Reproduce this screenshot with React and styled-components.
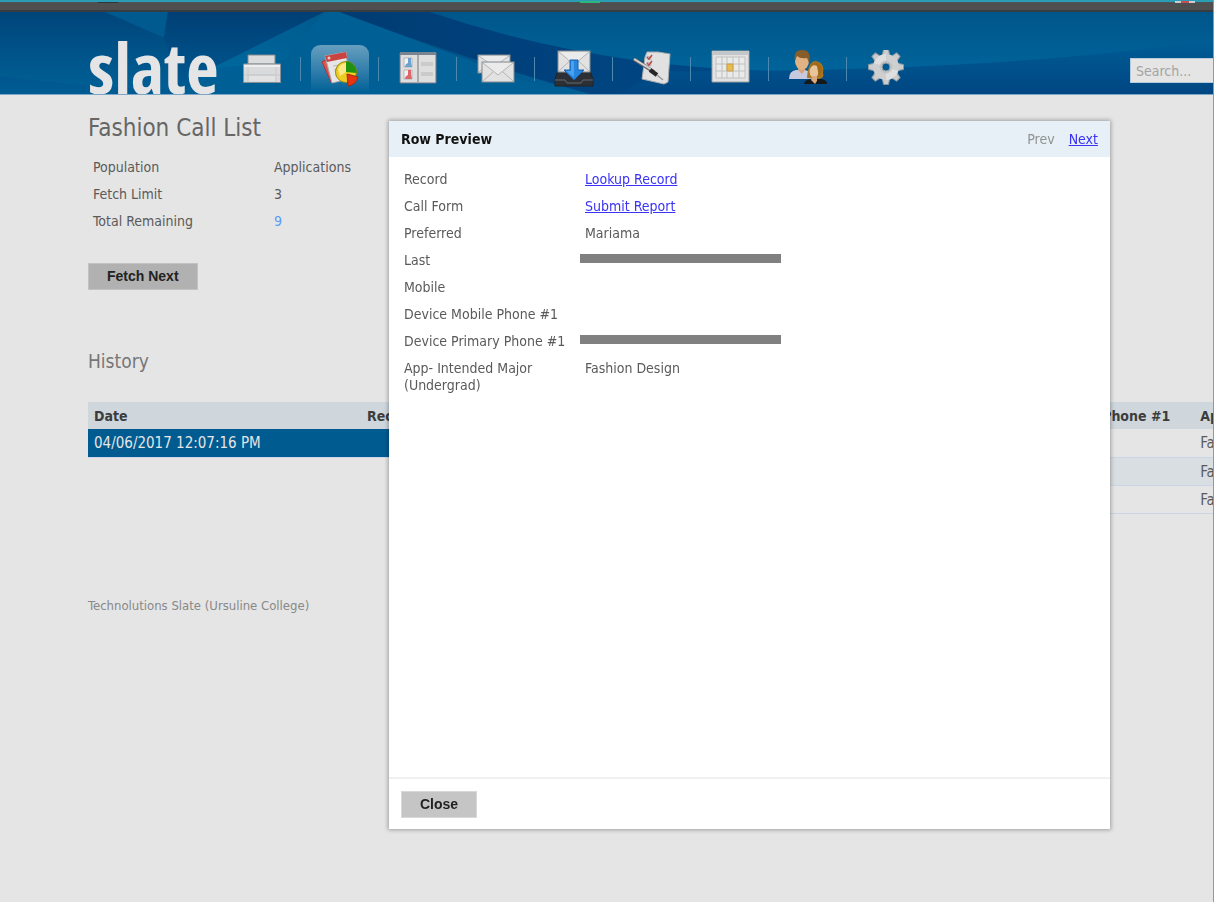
import React from "react";
import styled, { createGlobalStyle } from "styled-components";

const GlobalStyle = createGlobalStyle`
  * { box-sizing: border-box; }
  html, body { margin: 0; padding: 0; }
  body {
    background: #e5e5e5;
    color: #5a5a5a;
    font-family: "DejaVu Sans Condensed", "DejaVu Sans", "Noto Sans", sans-serif;
    font-size: 14px;
    line-height: 17px;
    overflow: hidden;
  }
`;

const Page = styled.div`
  min-height: 100vh;
  border-right: 1px solid #7ba3ad;
  overflow: hidden;
`;

const WindowBar = styled.div`
  height: 12px;
  display: flex;
  align-items: flex-start;
  padding: 0 18px 0 98px;
  background: linear-gradient(#2b9db5 0 2px, #4e5558 2px 3px, #4f4f4f 3px 10px, #363c40 10px);
`;

const Mark = styled.span`
  width: 20px;
  height: 3px;
  margin-left: ${(p) => p.$gap};
  background: ${(p) => p.$fill};
`;

const Header = styled.header`
  position: relative;
  height: 83px;
  display: flex;
  align-items: stretch;
  padding-left: 88px;
  background: #005b92;
  border-bottom: 1px solid #7da5c6;
  overflow: hidden;
`;

const Backdrop = styled.svg`
  position: absolute;
  inset: 0;
  width: 100%;
  height: 100%;
`;

const Logo = styled.a`
  position: relative;
  width: 135px;
  height: 83px;
  flex: none;
  overflow: hidden;
  color: #e5e5e5;
  font-family: "Liberation Sans Narrow", "Open Sans Condensed", "Noto Sans Condensed", "Liberation Sans", sans-serif;
  font-weight: 700;
  font-size: 70px;
  line-height: 110px;
  text-decoration: none;
`;

const Nav = styled.nav`
  position: relative;
  display: flex;
  flex: none;
`;

const NavItem = styled.a`
  width: 78px;
  display: flex;
  justify-content: center;
  padding-top: 33px;
  position: relative;
  &:not(:last-child)::after {
    content: "";
    position: absolute;
    right: 0;
    top: 45px;
    width: 1px;
    height: 24px;
    background: #4d88b0;
  }
`;

const NavTile = styled.span`
  width: 58px;
  height: 50px;
  display: flex;
  justify-content: center;
  padding-top: 5px;
  border-radius: 9px 9px 0 0;
  background: ${(p) => (p.$active ? "linear-gradient(rgba(230, 235, 240, 0.45), rgba(200, 220, 235, 0.25) 50%, rgba(200, 220, 235, 0) 96%)" : "none")};
`;

const Search = styled.input`
  position: relative;
  margin: 46px -41px 0 auto;
  width: 124px;
  height: 25px;
  padding: 0 5px;
  border: 1px solid #b8cbda;
  border-radius: 0;
  background: #e5e5e5;
  color: #555;
  font: inherit;
  &::placeholder { color: #a3a3a3; opacity: 1; }
`;

const Main = styled.main`
  padding: 20px 0 0 88px;
`;

const Title = styled.h1`
  margin: 0;
  color: #666;
  font-size: 24px;
  line-height: 26px;
  font-weight: 400;
`;

const Subtitle = styled.h2`
  margin: 59px 0 0;
  color: #777;
  font-size: 19px;
  line-height: 24px;
  font-weight: 400;
`;

const Fields = styled.table`
  border-collapse: collapse;
  table-layout: fixed;
  width: 382px;
  margin-top: ${(p) => p.$top}px;
  th, td {
    padding: 5px;
    text-align: left;
    vertical-align: top;
    font-weight: 400;
  }
  th { width: 181px; padding-right: 0; }
`;

const Count = styled.span`
  color: #5c9bf5;
`;

const Button = styled.button`
  height: 27px;
  padding: 0 18px;
  border: 1px solid ${(p) => (p.$light ? "#d8d8d8" : "#c2c2c2")};
  background: ${(p) => (p.$light ? "#c5c5c5" : "#b1b1b1")};
  color: #222;
  font: 700 14px/17px "Liberation Sans", Arial, sans-serif;
`;

const FetchButton = styled(Button)`
  display: block;
  margin-top: 28px;
`;

const History = styled.div`
  display: flex;
  margin-top: 29px;
`;

const HistoryTable = styled.table`
  border-collapse: collapse;
  flex: none;
  align-self: flex-start;
  white-space: nowrap;
  th, td { text-align: left; padding: 2px 24px 0 6px; }
  th { height: 27px; background: #cfd7dd; color: #3c3c3c; }
  td { height: 28px; border-bottom: 1px solid #ccd5e6; font-size: 15px; }
  th:first-child { width: ${(p) => (p.$first ? `${p.$first}px` : "auto")}; }
`;

const PhoneTable = styled(HistoryTable)`
  margin-left: auto;
  margin-right: -157px;
`;

const Row = styled.tr`
  background: ${(p) => (p.$selected ? "#005b91" : p.$alt ? "#d9dee2" : "transparent")};
  color: ${(p) => (p.$selected ? "#e5e5e5" : "inherit")};
`;

const Footer = styled.footer`
  margin-top: 83px;
  color: #888;
  font-size: 13px;
`;

const Dialog = styled.section`
  position: fixed;
  top: 121px;
  right: 104px;
  bottom: 73px;
  left: 389px;
  display: flex;
  flex-direction: column;
  background: #fff;
  box-shadow: 0 0 4px 1px rgba(0, 0, 0, 0.3);
`;

const DialogHeader = styled.header`
  display: flex;
  align-items: center;
  gap: 14px;
  height: 36px;
  padding: 0 12px;
  background: #e6f0f6;
`;

const DialogTitle = styled.h2`
  flex: 1;
  margin: 0;
  color: #111;
  font-size: 14px;
`;

const Muted = styled.span`
  color: #929292;
`;

const Link = styled.a`
  color: #3a32f5;
  text-decoration: underline;
`;

const DialogBody = styled.div`
  flex: 1;
  padding: 0 10px;
`;

const RedactedCell = styled.td`
  && { padding: 7px 0 0; }
`;

const Redaction = styled.span`
  display: block;
  height: 9px;
  background: #808080;
`;

const DialogFooter = styled.footer`
  padding: 12px;
  height: 52px;
  border-top: 2px solid #f1f1f1;
`;

const Icon = ({ children }) => (
  <svg width="40" height="40" viewBox="0 0 40 40" aria-hidden="true">{children}</svg>
);

const Envelope = ({ x, y, w = 32, h = 20 }) => (
  <g transform={`translate(${x} ${y})`} stroke="#b4b4b4" fill="none">
    <rect width={w} height={h} fill="#e2e2e2" stroke="#858b90" />
    <path d={`M1 ${h - 1}L${w * 0.38} ${h * 0.45}M${w - 1} ${h - 1}L${w * 0.62} ${h * 0.45}`} />
    <path d={`M1 1L${w / 2} ${h * 0.65}L${w - 1} 1`} fill="#ebebeb" />
  </g>
);

const gearTeeth = Array.from({ length: 8 }, (_, i) => i * 45);

const icons = [
  ["Home", <Icon>
    <path d="M6 5H33V14H6z" fill="#dcdcdc" stroke="#858b90" />
    <path d="M1.500 14H38.500V32.500H1.500z" fill="#d9dadb" stroke="#8a9298" />
    <path d="M2 15H38V17H2z" fill="#eee" />
    <path d="M6 17V25H34V17M2 25H38M6 25V32M34 25V32" fill="none" stroke="#c8cacc" />
    <path d="M7 26H33V31H7z" fill="#e3e3e3" />
  </Icon>],
  ["Queries", <Icon>
    <path d="M2 12L7 9L15 31L11 32z" fill="#dc5553" stroke="#a93636" />
    <path d="M5 6L26 2L29 29L12 33z" fill="#e6e6e6" stroke="#aaa" />
    <path d="M5 6L26 2L27 8L7 12z" fill="#c94340" />
    <circle cx="9" cy="8" r="1.500" fill="#f0c3c2" />
    <path d="M13 16L25 14M14 20L22 18M15 25L20 24" stroke="#bbb" />
    <circle cx="26" cy="22" r="10.500" fill="#edce20" stroke="#96841c" />
    <path d="M18 19A9 9 0 0 1 26 13V22L20 26z" fill="#fae785" />
    <path d="M26 22V11.500A10.500 10.500 0 0 1 36.500 23z" fill="#21920f" />
    <path d="M27 24L38 27A11 11 0 0 1 28 36z" fill="#e73512" stroke="#9f2a15" />
  </Icon>],
  ["Lookup", <Icon>
    <path d="M2 3H38V33H2z" fill="#dededf" stroke="#778" />
    <path d="M2 2H38V5H2z" fill="#798392" />
    <path d="M20 5V33" stroke="#aaa" strokeWidth="2" />
    <path d="M6 8H14V17H6zM6 20H14V29H6z" fill="#f2f2f2" stroke="#b6b6b6" />
    <path d="M10 8H13V12L14 17H7Q7 14 10 13z" fill="#6aa3d2" />
    <path d="M10 20H13V24L14 29H7Q7 26 10 25z" fill="#dc6669" />
    <path d="M23 13H35M23 15H35M23 23H35M23 25H35" stroke="#b7b7b7" />
  </Icon>],
  ["Mail", <Icon><Envelope x={2} y={5} h={18} /><Envelope x={6} y={12} /></Icon>],
  ["Inbox", <Icon>
    <path d="M4 21H36L39 29V36H1V29z" fill="#2c3035" stroke="#202328" />
    <path d="M1 30H11L13 33H27L29 30H39" fill="none" stroke="#626970" />
    <Envelope x={4} y={1} h={21} />
    <path d="M16 10H24V20H30L20 30L10 20H16z" fill="#2686df" stroke="#1862b0" />
    <path d="M17 11H20V27L12 21H17z" fill="#4aa1ed" />
  </Icon>],
  ["Forms", <Icon>
    <path d="M15 2H26L38 4L36 32L32 34L10 29L13 7z" fill="#e1e1e1" stroke="#aaa" />
    <path d="M15 6L19 7V10L15 9zM15 12L19 13V16L15 15z" fill="#f3e8e8" stroke="#bbb" />
    <path d="M15 7L17 9L20 5M15 13L17 15L20 11" fill="none" stroke="#bd4a49" strokeWidth="1.500" />
    <path d="M2 9L22 22" stroke="#666" strokeWidth="3.500" />
    <path d="M2 9L20 20" stroke="#d6d6d6" strokeWidth="2" />
    <path d="M18 20L25 25" stroke="#262626" strokeWidth="4" />
    <path d="M25 25L31 30" stroke="#999" strokeWidth="1.500" />
  </Icon>],
  ["Events", <Icon>
    <path d="M2 1H39V32H2z" fill="#e2e2e2" stroke="#999da0" />
    <path d="M2 1H39V5H2z" fill="#c3c7c9" />
    <path d="M6 7H35V28H6z" fill="#eaeaea" />
    <path d="M6 7H35V28H6zM6 14H35M6 21H35M12 7V28M17 7V28M23 7V28M29 7V28" fill="none" stroke="#bfc0c1" />
    <path d="M17 14H23V21H17z" fill="#e7bd4e" stroke="#ca9e4a" />
  </Icon>],
  ["Users", <Icon>
    <path d="M1 29Q1 21 8 20H17Q24 21 23 29z" fill="#c7c9df" />
    <path d="M11 15H17V20L14 24L10 20z" fill="#d6a277" />
    <ellipse cx="14" cy="11" rx="7" ry="9" fill="#e1b384" />
    <path d="M7 11Q5 0 14 0Q24 0 21 13L19 8Q12 9 9 6z" fill="#875d29" />
    <path d="M16 34Q16 30 23 29H34Q39 30 39 34z" fill="#15191d" />
    <path d="M19 28Q20 12 27 11Q37 12 35 23Q37 28 31 29z" fill="#a87522" />
    <ellipse cx="26" cy="21" rx="4.500" ry="7" fill="#e8c49a" />
    <path d="M24 26H29V31L27 34L23 30z" fill="#d9aa7e" />
    <path d="M21 21Q24 13 29 16L31 27Q37 19 31 13Q23 9 21 21" fill="#a26b19" />
  </Icon>],
  ["Settings", <Icon>
    <g transform="translate(20 17)">
      {gearTeeth.map((a) => (
        <path key={a} d="M-4 -10L-2.500 -17.500H2.500L4 -10z" transform={`rotate(${a})`} fill="#cacccd" stroke="#8c969e" />
      ))}
      <circle r="13" fill="#cdcfd0" />
      <path d="M-12 -4A13 13 0 0 1 0 -13L0 0zM12 4A13 13 0 0 1 0 13L0 0z" fill="#dfdfdf" />
      <circle r="6.500" fill="#c1c3c5" />
      <circle r="4" fill="#005a91" stroke="#9b9fa3" />
    </g>
  </Icon>],
];

const HeaderBackdrop = () => (
  <Backdrop viewBox="0 0 1214 83" preserveAspectRatio="none" aria-hidden="true">
    <defs>
      <linearGradient id="base" x2="0" y2="1">
        <stop offset="0" stopColor="#00457a" /><stop offset="1" stopColor="#006197" />
      </linearGradient>
      <linearGradient id="deep" x2="0" y2="1">
        <stop offset="0" stopColor="#003f75" /><stop offset="1" stopColor="#005c94" />
      </linearGradient>
      <linearGradient id="ray" x1="1" x2="0" y2="1">
        <stop offset="0" stopColor="#005a8e" /><stop offset="1" stopColor="#00689d" />
      </linearGradient>
      <linearGradient id="band" x2="1">
        <stop offset="0" stopColor="#003c73" /><stop offset="0.500" stopColor="#00427e" /><stop offset="1" stopColor="#004b87" />
      </linearGradient>
      <linearGradient id="sky" x2="0" y2="1">
        <stop offset="0" stopColor="#00568b" /><stop offset="1" stopColor="#00649a" />
      </linearGradient>
      <linearGradient id="low" x2="0" y2="1">
        <stop offset="0" stopColor="#005d95" /><stop offset="1" stopColor="#004683" />
      </linearGradient>
    </defs>
    <rect width="1214" height="83" fill="url(#base)" />
    <path d="M105 0H330L210 58L180 83H0V65Q100 78 180 78L164 26z" fill="url(#deep)" />
    <path d="M105 0H168L164 26z" fill="#005a8f" />
    <path d="M325 0H340L560 83H180L210 58z" fill="#006096" />
    <path d="M325 0L210 58L285 48z" fill="url(#ray)" />
    <path d="M340 0H480Q620 52 780 60V83H590Q460 46 340 0z" fill="url(#band)" />
    <path d="M430 0H1214V44Q1000 61 790 60Q600 58 430 0z" fill="url(#sky)" />
    <path d="M660 60Q1000 61 1214 28V83H620z" fill="url(#low)" />
  </Backdrop>
);

export default function App() {
  return (
    <>
      <GlobalStyle />
      <Page>
        <WindowBar>
          <Mark $gap="0" $fill="linear-gradient(#2b9db5 0 2px, #30373a 2px)" />
          <Mark $gap="462px" $fill="linear-gradient(#2b9db5 0 1px, #2eb67d 1px)" />
          <Mark $gap="auto" $fill="linear-gradient(#2b9db5 0 1px, transparent 1px), linear-gradient(90deg, #ccc 0 6px, #c94b55 6px 14px, #ccc 14px)" />
        </WindowBar>
        <Header>
          <HeaderBackdrop />
          <Logo href="#home">slate</Logo>
          <Nav aria-label="Main">
            {icons.map(([name, icon]) => (
              <NavItem key={name} href={`#${name.toLowerCase()}`} aria-label={name}>
                <NavTile $active={name === "Queries"}>{icon}</NavTile>
              </NavItem>
            ))}
          </Nav>
          <Search type="text" placeholder="Search..." aria-label="Search" />
        </Header>
        <Main>
          <Title>Fashion Call List</Title>
          <Fields $top={13}>
            <tbody>
              <tr><th scope="row">Population</th><td>Applications</td></tr>
              <tr><th scope="row">Fetch Limit</th><td>3</td></tr>
              <tr><th scope="row">Total Remaining</th><td><Count>9</Count></td></tr>
            </tbody>
          </Fields>
          <FetchButton type="button">Fetch Next</FetchButton>
          <Subtitle>History</Subtitle>
          <History>
            <HistoryTable $first={273}>
              <thead><tr><th>Date</th><th>Record</th></tr></thead>
              <tbody><Row $selected><td>04/06/2017 12:07:16 PM</td><td /></Row></tbody>
            </HistoryTable>
            <PhoneTable>
              <thead><tr><th>Device Primary Phone #1</th><th>App- Intended Major</th></tr></thead>
              <tbody>
                <Row><td /><td>Fashion Design</td></Row>
                <Row $alt><td /><td>Fashion Design</td></Row>
                <Row><td /><td>Fashion Design</td></Row>
              </tbody>
            </PhoneTable>
          </History>
          <Footer>Technolutions Slate (Ursuline College)</Footer>
        </Main>
        <Dialog role="dialog" aria-labelledby="preview-title">
          <DialogHeader>
            <DialogTitle id="preview-title">Row Preview</DialogTitle>
            <Muted>Prev</Muted>
            <Link href="#next">Next</Link>
          </DialogHeader>
          <DialogBody>
            <Fields $top={9}>
              <tbody>
                <tr><th scope="row">Record</th><td><Link href="#record">Lookup Record</Link></td></tr>
                <tr><th scope="row">Call Form</th><td><Link href="#report">Submit Report</Link></td></tr>
                <tr><th scope="row">Preferred</th><td>Mariama</td></tr>
                <tr><th scope="row">Last</th><RedactedCell><Redaction /></RedactedCell></tr>
                <tr><th scope="row">Mobile</th><td /></tr>
                <tr><th scope="row">Device Mobile Phone #1</th><td /></tr>
                <tr><th scope="row">Device Primary Phone #1</th><RedactedCell><Redaction /></RedactedCell></tr>
                <tr><th scope="row">App- Intended Major (Undergrad)</th><td>Fashion Design</td></tr>
              </tbody>
            </Fields>
          </DialogBody>
          <DialogFooter>
            <Button type="button" $light>Close</Button>
          </DialogFooter>
        </Dialog>
      </Page>
    </>
  );
}
